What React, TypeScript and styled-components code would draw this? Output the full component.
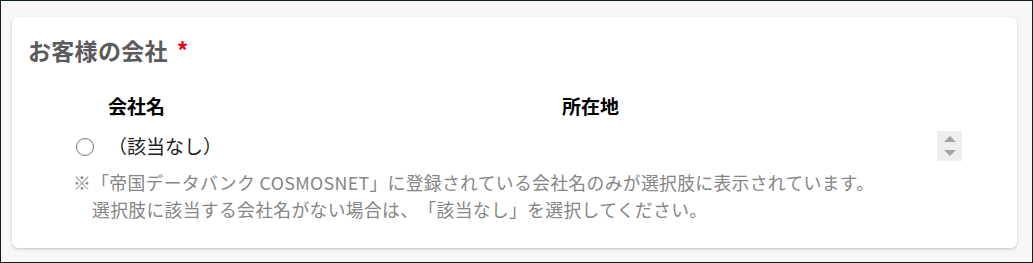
import React from "react";
import styled, { createGlobalStyle } from "styled-components";

const GlobalStyle = createGlobalStyle`
  html, body {
    margin: 0;
    padding: 0;
    background: #f7f7f7;
  }
  * {
    box-sizing: border-box;
  }
`;

const FONT = `"Noto Sans CJK JP", "Noto Sans", sans-serif`;

const Frame = styled.div`
  width: 1033px;
  height: 263px;
  border: 1px solid #0e201b;
  background: #f7f7f7;
  padding: 16px 15px 14px 11px;
  font-family: ${FONT};
  text-spacing-trim: space-all;
`;

const Card = styled.section`
  background: #ffffff;
  border-radius: 6px;
  box-shadow: 0 1px 3px rgba(0, 0, 0, 0.22);
  padding: 16px 16px 23px 16px;
  height: 231px;
`;

const Title = styled.h2`
  margin: 0;
  font-size: 23px;
  line-height: 34px;
  font-weight: 700;
  color: #5b5b5b;
  letter-spacing: 0.3px;
`;

const Required = styled.span`
  color: #e60012;
  margin-left: 9px;
`;

const Table = styled.div`
  margin: 25px 0 0 48px;
  display: grid;
  grid-template-columns: 32px 454px 375px 25px;
`;

const HeadCell = styled.div<{ $col: number }>`
  grid-column: ${({ $col }) => $col};
  font-size: 19px;
  line-height: 27px;
  font-weight: 700;
  color: #000000;
`;

const Row = styled.div`
  grid-column: 1 / -1;
  display: grid;
  grid-template-columns: subgrid;
  align-items: center;
  height: 30px;
  margin-top: 12px;
`;

const Radio = styled.span`
  display: block;
  width: 18px;
  height: 18px;
  border: 1px solid #767676;
  border-radius: 50%;
  background: #ffffff;
  margin-top: 2px;
`;

const Label = styled.span`
  grid-column: 2 / 4;
  font-size: 19px;
  line-height: 30px;
  color: #1e1e1e;
`;

const Spinner = styled.div`
  grid-column: 4;
  height: 30px;
  background: #eeeeee;
  display: flex;
  flex-direction: column;
  align-items: center;
  justify-content: center;
  gap: 8px;
`;

const Arrow = styled.span<{ $down?: boolean }>`
  width: 0;
  height: 0;
  border-left: 6px solid transparent;
  border-right: 6px solid transparent;
  ${({ $down }) =>
    $down ? "border-top: 6px solid #a3a3a3;" : "border-bottom: 6px solid #a3a3a3;"}
`;

const Note = styled.p`
  margin: 8px 0 0 45px;
  font-size: 17.8px;
  line-height: 27px;
  letter-spacing: 0.35px;
  color: #858585;
`;

const NoteLine = styled.span<{ $indent?: boolean }>`
  display: block;
  padding-left: ${({ $indent }) => ($indent ? "19px" : "0")};
  white-space: nowrap;
`;

export default function App() {
  return (
    <>
      <GlobalStyle />
      <Frame>
        <Card>
          <Title>
            お客様の会社<Required>*</Required>
          </Title>
          <Table>
            <HeadCell $col={2}>会社名</HeadCell>
            <HeadCell $col={3}>所在地</HeadCell>
            <Row>
              <Radio />
              <Label>（該当なし）</Label>
              <Spinner>
                <Arrow />
                <Arrow $down />
              </Spinner>
            </Row>
          </Table>
          <Note>
            <NoteLine>
              ※「帝国データバンク COSMOSNET」に登録されている会社名のみが選択肢に表示されています。
            </NoteLine>
            <NoteLine $indent>
              選択肢に該当する会社名がない場合は、「該当なし」を選択してください。
            </NoteLine>
          </Note>
        </Card>
      </Frame>
    </>
  );
}
